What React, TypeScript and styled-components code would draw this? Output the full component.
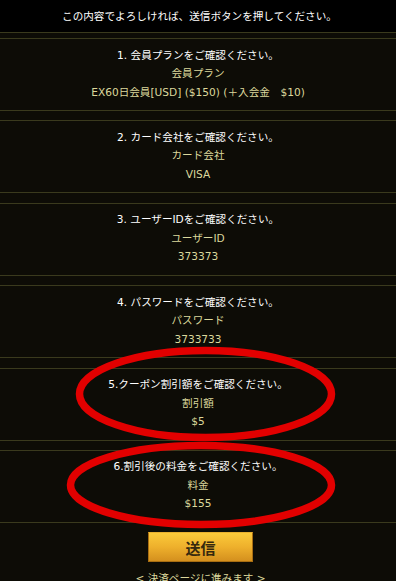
import React from "react";
import styled, { createGlobalStyle } from "styled-components";

const GlobalStyle = createGlobalStyle`
  html, body {
    margin: 0;
    padding: 0;
    background: #0d0c06;
  }
  body {
    font-family: "DejaVu Sans", "Noto Sans CJK JP", sans-serif;
    font-size: 10.6px;
    overflow: hidden;
  }
`;

const Page = styled.div`
  position: relative;
  width: 396px;
  height: 581px;
  overflow: hidden;
  background: #0d0c06;
`;

const Header = styled.div`
  height: 32px;
  line-height: 32px;
  background: #000;
  color: #ffffff;
  text-align: center;
  border-bottom: 1px solid #3a3a1d;
  padding-left: 3px;
`;

const List = styled.div`
  display: flex;
  flex-direction: column;
  gap: 9.4px;
  padding-top: 5px;
`;

const Item = styled.div`
  border-top: 1px solid #3a3a1d;
  border-bottom: 1px solid #3a3a1d;
  padding: 6.5px 0 9px;
  text-align: center;
  line-height: 18.5px;
`;

const Line = styled.div<{ $tone: "title" | "data" }>`
  color: ${(p) => (p.$tone === "title" ? "#ffffff" : "#dcd89c")};
  white-space: nowrap;
`;

const Actions = styled.div`
  display: flex;
  flex-direction: column;
  align-items: center;
  padding-top: 9.5px;
  padding-left: 5px;
`;

const SubmitButton = styled.button`
  width: 105px;
  height: 30px;
  border: 1px solid #a86e12;
  border-top-color: #e8b030;
  background: linear-gradient(to bottom, #fbca3a 0%, #eeb02c 50%, #d4901e 100%);
  color: #35280e;
  font-family: "Noto Sans CJK JP", sans-serif;
  font-weight: 700;
  font-size: 15px;
  padding: 0;
  cursor: pointer;
`;

const NextNote = styled.div`
  margin-top: 7px;
  color: #dcd89c;
  line-height: 18px;
  white-space: nowrap;
`;

const Annotation = styled.svg`
  position: absolute;
  left: 0;
  top: 0;
  width: 396px;
  height: 581px;
  pointer-events: none;
`;

const items: { title: string; label: string; value: string }[] = [
  { title: "1. 会員プランをご確認ください。", label: "会員プラン", value: "EX60日会員[USD] ($150) (＋入会金　$10)" },
  { title: "2. カード会社をご確認ください。", label: "カード会社", value: "VISA" },
  { title: "3. ユーザーIDをご確認ください。", label: "ユーザーID", value: "373373" },
  { title: "4. パスワードをご確認ください。", label: "パスワード", value: "3733733" },
  { title: "5.クーポン割引額をご確認ください。", label: "割引額", value: "$5" },
  { title: "6.割引後の料金をご確認ください。", label: "料金", value: "$155" },
];

export default function App() {
  return (
    <Page>
      <GlobalStyle />
      <Header>この内容でよろしければ、送信ボタンを押してください。</Header>
      <List>
        {items.map((it) => (
          <Item key={it.title}>
            <Line $tone="title">{it.title}</Line>
            <Line $tone="data">{it.label}</Line>
            <Line $tone="data">{it.value}</Line>
          </Item>
        ))}
      </List>
      <Actions>
        <SubmitButton type="button">送信</SubmitButton>
        <NextNote>&lt; 決済ページに進みます &gt;</NextNote>
      </Actions>
      <Annotation viewBox="0 0 396 581">
        <ellipse cx="205.5" cy="394" rx="126" ry="43.5" fill="none" stroke="#e20000" strokeWidth="7.5" />
        <ellipse cx="201" cy="485" rx="130.5" ry="39.5" fill="none" stroke="#e20000" strokeWidth="7.5" />
      </Annotation>
    </Page>
  );
}
